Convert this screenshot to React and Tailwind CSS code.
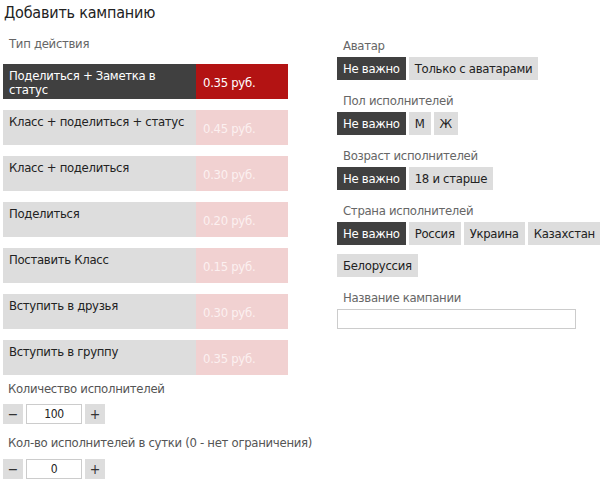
import React, { useState } from 'react';

const actions = [
    { title: 'Поделиться + Заметка в статус', price: '0.35 руб.' },
    { title: 'Класс + поделиться + статус', price: '0.45 руб.' },
    { title: 'Класс + поделиться', price: '0.30 руб.' },
    { title: 'Поделиться', price: '0.20 руб.' },
    { title: 'Поставить Класс', price: '0.15 руб.' },
    { title: 'Вступить в друзья', price: '0.30 руб.' },
    { title: 'Вступить в группу', price: '0.35 руб.' },
];

const filters = [
    { label: 'Аватар', options: ['Не важно', 'Только с аватарами'] },
    { label: 'Пол исполнителей', options: ['Не важно', 'М', 'Ж'] },
    { label: 'Возраст исполнителей', options: ['Не важно', '18 и старше'] },
    { label: 'Страна исполнителей', options: ['Не важно', 'Россия', 'Украина', 'Казахстан', 'Белоруссия'] },
];

// счётчик с кнопками − / +
const Stepper = ({ value, onChange }) => (
    <div className="flex items-center gap-[3px] h-[20px]">
        <button onClick={() => onChange(Math.max(0, value - 1))} className="w-[20px] h-[20px] bg-[#dddddd] text-[#333] text-[14px] leading-[20px] text-center">−</button>
        <input
            value={value}
            onChange={(e) => onChange(Number(e.target.value) || 0)}
            className="w-[56px] h-[20px] border border-[#cccccc] bg-white text-center text-[12px] text-[#222] outline-none"
        />
        <button onClick={() => onChange(value + 1)} className="w-[20px] h-[20px] bg-[#dddddd] text-[#333] text-[14px] leading-[20px] text-center">+</button>
    </div>
);

const FilterGroup = ({ label, options, selected, onSelect, first }) => (
    <div className={first ? '' : 'mt-[13px]'}>
        <div className="h-[15px] leading-[15px] pl-[6px] text-[#666]">{label}</div>
        <div className="mt-[4px] flex flex-wrap gap-x-[3px] gap-y-[9px]">
            {options.map((opt, i) => (
                <button
                    key={opt}
                    onClick={() => onSelect(i)}
                    className={`h-[23px] px-[6px] leading-[23px] text-[13px] tracking-[-0.3px] whitespace-nowrap ${selected === i ? 'bg-[#404040] text-white' : 'bg-[#dddddd] text-[#222]'}`}
                >
                    {opt}
                </button>
            ))}
        </div>
    </div>
);

export default function App() {
    const [action, setAction] = useState(0);
    const [sel, setSel] = useState([0, 0, 0, 0]);
    const [count, setCount] = useState(100);
    const [perDay, setPerDay] = useState(0);
    const [name, setName] = useState('');

    return (
        <div className="bg-white min-h-screen overflow-hidden font-['DejaVu_Sans_Condensed','DejaVu_Sans',sans-serif] text-[13px] tracking-[-0.3px] text-[#333] pl-[3px]">
            <h1 className="pt-[2px] pl-[1px] text-[16px] leading-[22px] tracking-[-0.2px] text-[#222]">Добавить кампанию</h1>

            <div className="flex">
                <div className="w-[285px] shrink-0">
                    <div className="mt-[12px] h-[15px] leading-[15px] pl-[6px] text-[#666]">Тип действия</div>
                    <div className="mt-[13px] flex flex-col gap-[11px]">
                        {actions.map((a, i) => {
                            const active = action === i;
                            return (
                                <div key={a.title} onClick={() => setAction(i)} className="flex h-[35px] cursor-pointer">
                                    <div className={`w-[193px] pl-[6px] pr-2 pt-[5px] leading-[14px] ${active ? 'bg-[#404040] text-white' : 'bg-[#dddddd] text-[#222]'}`}>
                                        {a.title}
                                    </div>
                                    <div className={`flex-1 flex items-center pl-[7px] pt-[2px] ${active ? 'bg-[#b31313] text-white' : 'bg-[#f1d1d1] text-[#fcf0f0]'}`}>
                                        {a.price}
                                    </div>
                                </div>
                            );
                        })}
                    </div>

                    <div className="mt-[6px] h-[15px] leading-[15px] pl-[5px] text-[#555] whitespace-nowrap">Количество исполнителей</div>
                    <div className="mt-[8px]"><Stepper value={count} onChange={setCount} /></div>

                    <div className="mt-[11px] h-[15px] leading-[15px] pl-[5px] text-[#555] whitespace-nowrap">Кол-во исполнителей в сутки (0 - нет ограничения)</div>
                    <div className="mt-[9px]"><Stepper value={perDay} onChange={setPerDay} /></div>
                </div>

                <div className="ml-[49px] w-[275px] shrink-0 pt-[14px]">
                    {filters.map((f, gi) => (
                        <FilterGroup
                            key={f.label}
                            first={gi === 0}
                            label={f.label}
                            options={f.options}
                            selected={sel[gi]}
                            onSelect={(i) => setSel(sel.map((v, k) => (k === gi ? i : v)))}
                        />
                    ))}
                    <div className="mt-[13px] h-[15px] leading-[15px] pl-[6px] text-[#666]">Название кампании</div>
                    <input
                        value={name}
                        onChange={(e) => setName(e.target.value)}
                        className="mt-[4px] block w-[239px] h-[20px] border border-[#cccccc] bg-white outline-none px-1 text-[12px]"
                    />
                </div>
            </div>
        </div>
    );
}
